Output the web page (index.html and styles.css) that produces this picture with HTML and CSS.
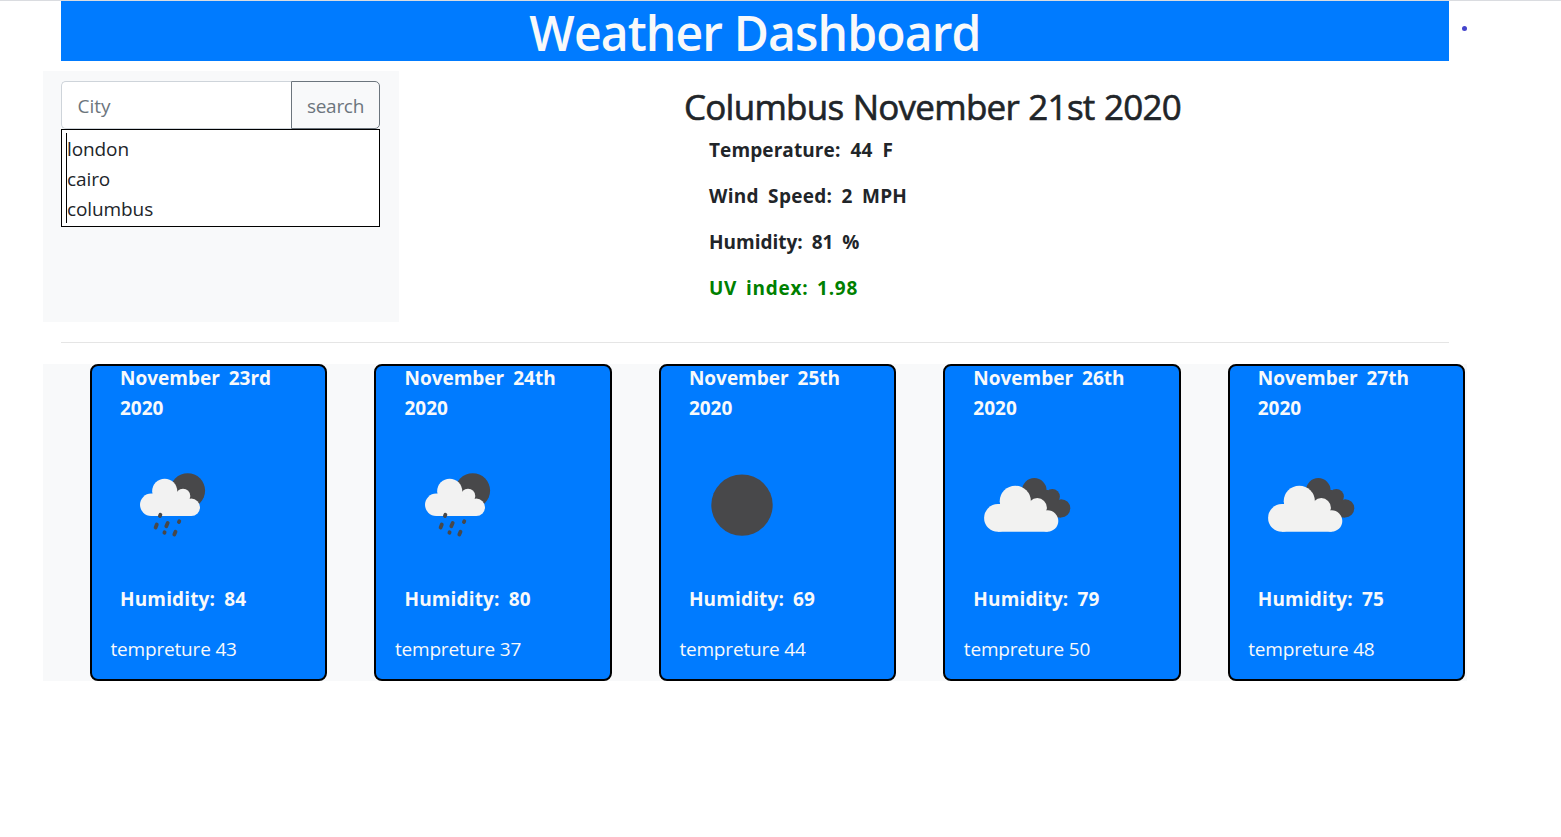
FILE: index.html
```html
<!DOCTYPE html>
<html lang="en">
<head>
<meta charset="utf-8">
<title>Weather Dashboard</title>
<link rel="stylesheet" href="styles.css">
</head>
<body>
<svg class="defs" width="0" height="0">
  <symbol id="rain" viewBox="0 0 125 125">
    <circle cx="77.700" cy="48.600" r="17.400" fill="#48484a"/>
    <g fill="#f2f2f2">
      <circle cx="41.200" cy="62.800" r="11.200"/>
      <circle cx="54.700" cy="49.200" r="12.500"/>
      <circle cx="73" cy="54" r="7.300"/>
      <circle cx="81.300" cy="65.300" r="8.700"/>
      <path d="M41.200 74V52H66l7 2 8.300 10v10z"/>
    </g>
    <path d="M50.400 72.700l-.5 1.300M46.800 82.500l-1.200 3M57.700 81l-1.400 3.200M69.300 79.200l-.4.900M54.600 90.200l-.2.500M65.500 89.700l-1.200 2.900" fill="none" stroke="#48484a" stroke-width="3.800" stroke-linecap="round"/>
  </symbol>
  <symbol id="clear" viewBox="0 0 125 125">
    <circle cx="63" cy="63.100" r="30.700" fill="#48484a"/>
  </symbol>
  <symbol id="clouds" viewBox="0 0 125 125">
    <g fill="#48484a">
      <circle cx="70.300" cy="48.400" r="12.300"/>
      <circle cx="88.300" cy="54.500" r="7.600"/>
      <circle cx="97.200" cy="66.300" r="9.100"/>
      <path d="M70 48h14l8 8 5 10v9.400H80z"/>
    </g>
    <g fill="#f2f2f1">
      <circle cx="33.900" cy="75.900" r="13.800"/>
      <circle cx="51.300" cy="59.300" r="15.600"/>
      <circle cx="73.300" cy="65.700" r="9.600"/>
      <circle cx="83.600" cy="79" r="10.700"/>
      <path d="M33.900 89.700V62H66l8 4 9.600 12v11.700z"/>
    </g>
  </symbol>
</svg>
<div class="page">
  <header class="banner"><h1>Weather Dashboard</h1><i class="dot"></i></header>
  <main>
    <section class="today">
      <aside class="panel">
        <form class="search">
          <input class="city" type="text" placeholder="City">
          <button class="go" type="button">search</button>
        </form>
        <div class="history"><ul><li>london</li><li>cairo</li><li>columbus</li></ul></div>
      </aside>
      <div class="current">
        <h2>Columbus November 21st 2020</h2>
        <div class="facts">
          <p class="temp">Temperature: 44 F</p>
          <p class="wind">Wind Speed: 2 MPH</p>
          <p class="hum">Humidity: 81 %</p>
          <p class="uv">UV index: 1.98</p>
        </div>
      </div>
    </section>
    <hr>
    <section class="forecast">
      <article class="card"><p class="date">November 23rd<br>2020</p><svg class="icon"><use href="#rain"/></svg><p class="humidity">Humidity: 84</p><p class="degrees">tempreture 43</p></article>
      <article class="card"><p class="date">November 24th<br>2020</p><svg class="icon"><use href="#rain"/></svg><p class="humidity">Humidity: 80</p><p class="degrees">tempreture 37</p></article>
      <article class="card"><p class="date">November 25th<br>2020</p><svg class="icon"><use href="#clear"/></svg><p class="humidity">Humidity: 69</p><p class="degrees">tempreture 44</p></article>
      <article class="card"><p class="date">November 26th<br>2020</p><svg class="icon"><use href="#clouds"/></svg><p class="humidity">Humidity: 79</p><p class="degrees">tempreture 50</p></article>
      <article class="card"><p class="date">November 27th<br>2020</p><svg class="icon"><use href="#clouds"/></svg><p class="humidity">Humidity: 75</p><p class="degrees">tempreture 48</p></article>
    </section>
  </main>
</div>
</body>
</html>
```
FILE: styles.css
```css
* { box-sizing: border-box; }
body {
  margin: 0;
  color: #212529;
  background: #fff;
  font: 19px/30px "Open Sans", "Noto Sans", sans-serif;
}
h1, h2, p, ul { margin: 0; padding: 0; }
.defs { position: absolute; }
.page { min-height: 837px; border-top: 1px solid #dadce0; }
.banner {
  position: relative;
  width: 1388px;
  height: 60px;
  margin-left: 61px;
  background: #007bff;
}
.banner h1 {
  color: #f8f9fa;
  font-size: 48px;
  font-weight: 600;
  line-height: 64px;
  text-align: center;
  letter-spacing: -0.85px;
}
.dot {
  position: absolute;
  right: -17.500px;
  top: 24.500px;
  width: 5px;
  height: 5px;
  border-radius: 50%;
  background: #4444cc;
}
.today { display: flex; margin: 10px 0 0 43px; }
.panel {
  width: 356px;
  height: 251px;
  padding: 10px 19px 0 18px;
  background: #f8f9fa;
}
.search { display: flex; height: 48px; }
.city, .go { font: inherit; height: 48px; padding: 2px 15.500px 0; }
.city {
  flex: 1;
  min-width: 0;
  border: 1px solid #ced4da;
  border-right: 0;
  border-radius: 5px 0 0 5px;
  background: #fff;
}
.city::placeholder { color: #6c757d; opacity: 1; }
.go {
  width: 89px;
  padding: 2px 0 0;
  color: #6c757d;
  letter-spacing: -0.3px;
  border: 1px solid #6c757d;
  border-radius: 0 5px 5px 0;
  background: #f8f9fa;
}
.history {
  height: 98px;
  padding: 3px 4px;
  border: 1px solid #000;
  background: #fff;
}
.history ul { height: 90px; list-style: none; border-left: 1px solid #000; letter-spacing: -0.1px; }
.history li { padding-top: 1px; margin-bottom: -1px; }
.current { padding: 15px 0 0 285px; }
.current h2 {
  font-size: 35px;
  font-weight: 500;
  line-height: 42px;
  letter-spacing: -0.75px;
  word-spacing: 1px;
  -webkit-text-stroke: 0.6px currentColor;
  white-space: nowrap;
}
.facts {
  display: grid;
  gap: 16px;
  margin: 7px 0 0 25px;
  font-family: "Comic Sans MS", "Open Sans", sans-serif;
  font-weight: 700;
  letter-spacing: 0.3px;
  word-spacing: 4px;
}
.temp { letter-spacing: 0.1px; word-spacing: 5px; }
.hum { letter-spacing: 0; word-spacing: 4px; }
.uv { color: #008000; letter-spacing: 0.75px; word-spacing: 3px; }
hr {
  width: 1388px;
  height: 1px;
  margin: 20px 0 21px 61px;
  border: 0;
  background: #e5e5e5;
}
.forecast {
  display: flex;
  gap: 47.200px;
  width: 1424px;
  margin-left: 43px;
  padding-left: 47px;
  background: #f8f9fa;
}
.card {
  flex: 0 0 237.250px;
  height: 317px;
  padding-left: 18px;
  color: #f8f9fa;
  border: 2px solid #000;
  border-radius: 8px;
  background: #007bff;
}
.date, .humidity {
  padding-left: 10px;
  font-family: "Comic Sans MS", "Open Sans", sans-serif;
  font-weight: 700;
  word-spacing: 4px;
}
.date { margin-top: -3px; }
.icon { display: block; width: 125px; height: 125px; margin: 19px 0 0 0.4px; }
.humidity { margin-top: 17px; letter-spacing: 0.15px; }
.degrees { margin: 20px 0 0 0.5px; letter-spacing: -0.18px; }
```
